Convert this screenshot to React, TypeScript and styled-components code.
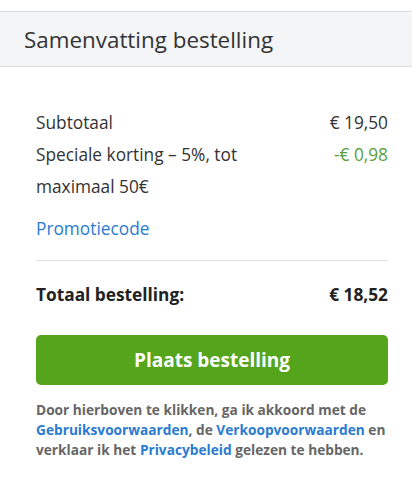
import React from 'react';
import styled, { createGlobalStyle } from 'styled-components';

const GlobalStyle = createGlobalStyle`
  body {
    margin: 0;
    background: #ffffff;
    font-family: 'Open Sans', 'Liberation Sans', sans-serif;
  }
`;

const StyledSummary = styled.div`
  width: 412px;
  padding-top: 11px;
`;

const StyledHeader = styled.div`
  height: 54px;
  display: flex;
  align-items: center;
  padding-left: 24px;
  background: #f4f5f7;
  border-top: 1px solid #dcdcdc;
  border-bottom: 1px solid #dcdcdc;
  font-size: 22.4px;
  color: #333333;
`;

const StyledBody = styled.div`
  padding: 40px 24px 0 36px;
`;

const StyledRow = styled.div<{ bold?: boolean }>`
  display: flex;
  justify-content: space-between;
  align-items: flex-start;
  font-size: 17.3px;
  font-weight: ${({ bold }) => (bold ? 700 : 400)};
  line-height: 32px;
  color: ${({ bold }) => (bold ? '#222222' : '#333333')};
`;

const StyledLabel = styled.span`
  max-width: 240px;
`;

const StyledAmount = styled.span<{ discount?: boolean }>`
  color: ${({ discount }) => (discount ? '#5a9e3a' : 'inherit')};
  white-space: nowrap;
`;

const StyledPromo = styled.a`
  display: block;
  margin-top: 10px;
  font-size: 17.3px;
  line-height: 32px;
  color: #2a7bd1;
  text-decoration: none;
`;

const StyledDivider = styled.hr`
  border: none;
  border-top: 1px solid #e0e0e0;
  margin: 15px 0 18px;
`;

const StyledButton = styled.button`
  display: block;
  width: 100%;
  height: 50px;
  margin-top: 24px;
  border: none;
  border-radius: 5px;
  background: #55a51c;
  color: #ffffff;
  font-family: 'Open Sans', 'Liberation Sans', sans-serif;
  font-size: 19px;
  font-weight: 700;
  cursor: pointer;
`;

const StyledLegal = styled.p`
  margin: 15px 0 0;
  font-size: 13.7px;
  font-weight: 700;
  line-height: 20px;
  color: #666666;

  a {
    color: #2a7bd1;
    text-decoration: none;
  }
`;

export default function App() {
  return (
    <StyledSummary>
      <GlobalStyle />
      <StyledHeader>Samenvatting bestelling</StyledHeader>
      <StyledBody>
        <StyledRow>
          <StyledLabel>Subtotaal</StyledLabel>
          <StyledAmount>€ 19,50</StyledAmount>
        </StyledRow>
        <StyledRow>
          <StyledLabel>Speciale korting – 5%, tot maximaal 50€</StyledLabel>
          <StyledAmount discount>-€ 0,98</StyledAmount>
        </StyledRow>
        <StyledPromo href="#">Promotiecode</StyledPromo>
        <StyledDivider />
        <StyledRow bold>
          <span>Totaal bestelling:</span>
          <StyledAmount>€ 18,52</StyledAmount>
        </StyledRow>
        <StyledButton>Plaats bestelling</StyledButton>
        <StyledLegal>
          Door hierboven te klikken, ga ik akkoord met de{' '}
          <a href="#">Gebruiksvoorwaarden</a>, de <a href="#">Verkoopvoorwaarden</a> en verklaar ik het{' '}
          <a href="#">Privacybeleid</a> gelezen te hebben.
        </StyledLegal>
      </StyledBody>
    </StyledSummary>
  );
}
